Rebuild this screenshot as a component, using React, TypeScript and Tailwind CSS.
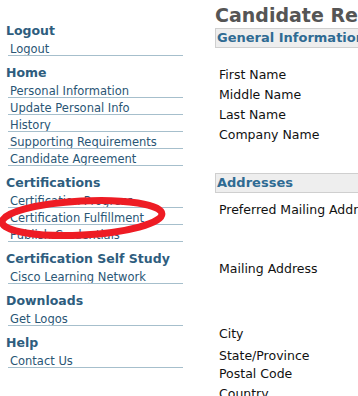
import React from "react";

const sections = [
    { title: "Logout", links: ["Logout"] },
    {
        title: "Home",
        links: [
            "Personal Information",
            "Update Personal Info",
            "History",
            "Supporting Requirements",
            "Candidate Agreement",
        ],
    },
    {
        title: "Certifications",
        links: ["Certification Progress", "Certification Fulfillment", "Publish Credentials"],
    },
    { title: "Certification Self Study", links: ["Cisco Learning Network"] },
    { title: "Downloads", links: ["Get Logos"] },
    { title: "Help", links: ["Contact Us"] },
];

const Sidebar = () => (
    <div className="w-[190px] shrink-0 self-start pt-[14px]">
        {sections.map((s) => (
            <div key={s.title}>
                <div className="h-[25px] pt-[9px] pl-[6px] text-[12.5px] leading-[16px] font-bold text-[#2e5d7e] whitespace-nowrap">
                    {s.title}
                </div>
                {s.links.map((l) => (
                    <div
                        key={l}
                        className="ml-[8px] w-[175px] h-[17px] pt-[4px] pl-[2px] border-b border-[#a6bfcc] text-[11.5px] leading-[12px] text-[#2a5675] whitespace-nowrap overflow-hidden"
                    >
                        {l}
                    </div>
                ))}
            </div>
        ))}
    </div>
);

const Bar = ({ children }: { children: React.ReactNode }) => (
    <div className="h-[20px] w-[300px] shrink-0 border border-[#cfcfcf] bg-[#eeeeee] pl-[1px] text-[13px] leading-[18px] font-bold text-[#2f6b93] whitespace-nowrap">
        {children}
    </div>
);

const Label = ({ children, h = "h-[20px]" }: { children: React.ReactNode; h?: string }) => (
    <div className={`${h} shrink-0 pl-[4px] text-[12.5px] leading-[20px] text-[#111] whitespace-nowrap`}>
        {children}
    </div>
);

const Main = () => (
    <div className="flex flex-col self-start pl-[25px] pt-[4px] w-[400px] shrink-0">
        <div className="text-[19px] leading-[22px] font-bold text-[#555555] whitespace-nowrap">
            Candidate Record
        </div>
        <div className="mt-[2px]">
            <Bar>General Information</Bar>
        </div>
        <div className="h-[17px] shrink-0" />
        <Label>First Name</Label>
        <Label>Middle Name</Label>
        <Label>Last Name</Label>
        <Label>Company Name</Label>
        <div className="h-[28px] shrink-0" />
        <Bar>Addresses</Bar>
        <div className="h-[7px] shrink-0" />
        <Label h="h-[59px]">Preferred Mailing Address</Label>
        <Label h="h-[65px]">Mailing Address</Label>
        <Label h="h-[22px]">City</Label>
        <Label h="h-[18px]">State/Province</Label>
        <Label>Postal Code</Label>
        <Label>Country</Label>
    </div>
);

export default function App() {
    return (
        <div
            className="relative w-[358px] h-[396px] overflow-hidden bg-white flex"
            style={{ fontFamily: '"DejaVu Sans", Verdana, sans-serif' }}
        >
            <Sidebar />
            <Main />
            <svg
                className="absolute left-0 top-0 pointer-events-none"
                width="358"
                height="396"
                viewBox="0 0 358 396"
            >
                <ellipse
                    cx="82"
                    cy="218"
                    rx="80"
                    ry="17"
                    fill="none"
                    stroke="#ee1c24"
                    strokeWidth="7"
                    transform="rotate(-3 82 218)"
                />
            </svg>
        </div>
    );
}
